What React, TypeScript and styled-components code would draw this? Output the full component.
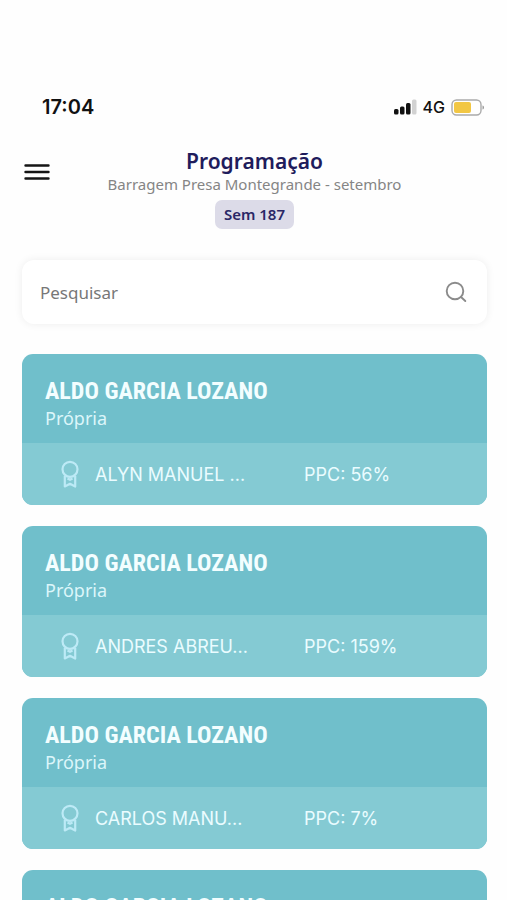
import React from 'react';
import styled, { createGlobalStyle } from 'styled-components';

const GlobalStyle = createGlobalStyle`
  *, *::before, *::after { box-sizing: border-box; }
  body { margin: 0; background: #fefefe; }
  button, input { font: inherit; color: inherit; border: 0; background: none; padding: 0; }
`;

const Screen = styled.div`
  display: flex;
  flex-direction: column;
  height: 100vh;
  padding: 92px 20px 0 22px;
  overflow: hidden;
  font-family: 'Noto Sans', sans-serif;
`;

const StatusBar = styled.div`
  display: flex;
  justify-content: space-between;
  align-items: center;
  flex: none;
  height: 30px;
  padding: 0 2px 0 20px;
  font-family: Inter, sans-serif;
  color: #111;
`;

const Clock = styled.time`
  font-size: 20px;
  font-weight: 600;
`;

const Indicators = styled.div`
  display: flex;
  align-items: center;
  gap: 6px;
  font-size: 16px;
  font-weight: 500;
`;

const Header = styled.header`
  display: grid;
  grid-template-columns: 30px 1fr 30px;
  flex: none;
  padding-top: 26px;
`;

const MenuButton = styled.button`
  display: flex;
  align-items: center;
  align-self: start;
  height: 48px;
  padding-left: 2px;
`;

const Heading = styled.div`
  display: flex;
  flex-direction: column;
  align-items: center;
`;

const Title = styled.h1`
  margin: 0;
  font-size: 21px;
  line-height: 26px;
  font-weight: 600;
  color: #1f1c5c;
`;

const Subtitle = styled.p`
  margin: 0;
  font-size: 15px;
  line-height: 20px;
  white-space: nowrap;
  color: #858585;
`;

const WeekBadge = styled.span`
  margin-top: 6px;
  padding: 0 9px;
  border-radius: 7px;
  background: #dcdbe8;
  color: #2a2766;
  font-size: 15px;
  line-height: 29px;
  font-weight: 600;
`;

const SearchBox = styled.label`
  display: flex;
  align-items: center;
  flex: none;
  height: 64px;
  margin: 31px 0 30px;
  padding: 0 20px 0 18px;
  border-radius: 12px;
  background: #fff;
  box-shadow: 0 0 8px rgba(0, 0, 0, 0.07);
`;

const SearchInput = styled.input`
  flex: 1;
  min-width: 0;
  height: 100%;
  outline: none;
  font-size: 17px;
  color: #777;
  &::placeholder { color: #777; opacity: 1; }
`;

const List = styled.ul`
  display: flex;
  flex-direction: column;
  flex: 1;
  gap: 21px;
  min-height: 0;
  margin: 0;
  padding: 0;
  list-style: none;
  overflow-y: auto;
  scrollbar-width: none;
`;

const Card = styled.li`
  flex: none;
  min-height: 151px;
  border-radius: 11px;
  overflow: hidden;
  background: #70bfcb;
  color: #f3feff;
`;

const CardTop = styled.div`
  height: 89px;
  padding: 22px 23px 0;
`;

const Name = styled.h2`
  margin: 0;
  font-family: 'Roboto Condensed', 'Noto Sans', sans-serif;
  font-size: 24px;
  line-height: 30px;
  font-weight: 700;
  white-space: nowrap;
`;

const Company = styled.p`
  margin: 0;
  font-size: 18px;
  line-height: 24px;
  color: #dcf6fa;
`;

const CardBottom = styled.div`
  display: grid;
  grid-template-columns: 35px 209px 1fr;
  align-items: center;
  height: 62px;
  padding: 0 20px 0 38px;
  background: #84cad3;
  font-family: Inter, sans-serif;
  font-size: 18px;
  color: #eafcff;
`;

const Detail = styled.span`
  white-space: nowrap;
`;

const SignalIcon = () => (
  <svg width="23" height="16" viewBox="0 0 23 16" aria-hidden="true">
    <rect x="0" y="10" width="4.500" height="5.500" rx="1.500" fill="#111" />
    <rect x="6" y="7.500" width="4.500" height="8" rx="1.500" fill="#111" />
    <rect x="12" y="4" width="4.500" height="11.500" rx="1.500" fill="#111" />
    <rect x="18" y="0.500" width="4.500" height="15" rx="1.500" fill="#d2d2d2" />
  </svg>
);

const BatteryIcon = () => (
  <svg width="34" height="17" viewBox="0 0 34 17" aria-hidden="true">
    <rect x="1" y="1" width="29" height="15" rx="4.500" fill="#fff" stroke="#aaa" strokeWidth="1.400" />
    <rect x="3" y="3" width="17" height="11" rx="2" fill="#f2c744" />
    <path d="M31.500 6.500c2 .6 2 3.400 0 4z" fill="#999" />
  </svg>
);

const MenuIcon = () => (
  <svg width="26" height="18" viewBox="0 0 26 18" aria-hidden="true">
    <path d="M1.500 2.500h23M1.500 9h23M1.500 15.500h23" stroke="#151515" strokeWidth="2.400" strokeLinecap="round" />
  </svg>
);

const SearchIcon = () => (
  <svg width="22" height="22" viewBox="0 0 22 22" fill="none" stroke="#8b8b8b" strokeWidth="1.900" strokeLinecap="round" aria-hidden="true">
    <circle cx="10" cy="10" r="8.300" />
    <path d="M16 16l4.300 4" />
  </svg>
);

const AwardIcon = () => (
  <svg width="20" height="28" viewBox="0 0 20 28" fill="none" stroke="#bdeaf6" strokeWidth="2.200" strokeLinejoin="round" aria-hidden="true">
    <circle cx="10" cy="9.300" r="7.500" />
    <path d="M4.800 16v10.500l5.200-2.700 5.200 2.700V16M7.500 18.500l2.500 1.300 2.500-1.300" />
  </svg>
);

type Entry = { name: string; company?: string; person?: string; ppc?: number };

const entries: Entry[] = [
  { name: 'ALDO GARCIA LOZANO', company: 'Própria', person: 'ALYN MANUEL ...', ppc: 56 },
  { name: 'ALDO GARCIA LOZANO', company: 'Própria', person: 'ANDRES ABREU...', ppc: 159 },
  { name: 'ALDO GARCIA LOZANO', company: 'Própria', person: 'CARLOS MANU...', ppc: 7 },
  { name: 'ALDO GARCIA LOZANO' },
];

const EntryCard = ({ name, company, person, ppc }: Entry) => (
  <Card>
    <CardTop>
      <Name>{name}</Name>
      {company && <Company>{company}</Company>}
    </CardTop>
    {person && (
      <CardBottom>
        <AwardIcon />
        <Detail>{person}</Detail>
        <Detail>PPC: {ppc}%</Detail>
      </CardBottom>
    )}
  </Card>
);

export default function App() {
  return (
    <>
      <GlobalStyle />
      <Screen>
        <StatusBar>
          <Clock>17:04</Clock>
          <Indicators>
            <SignalIcon />
            <span>4G</span>
            <BatteryIcon />
          </Indicators>
        </StatusBar>
        <Header>
          <MenuButton type="button" aria-label="Menu">
            <MenuIcon />
          </MenuButton>
          <Heading>
            <Title>Programação</Title>
            <Subtitle>Barragem Presa Montegrande - setembro</Subtitle>
            <WeekBadge>Sem 187</WeekBadge>
          </Heading>
        </Header>
        <SearchBox>
          <SearchInput type="text" placeholder="Pesquisar" aria-label="Pesquisar" />
          <SearchIcon />
        </SearchBox>
        <List>
          {entries.map((entry, index) => (
            <EntryCard key={index} {...entry} />
          ))}
        </List>
      </Screen>
    </>
  );
}
